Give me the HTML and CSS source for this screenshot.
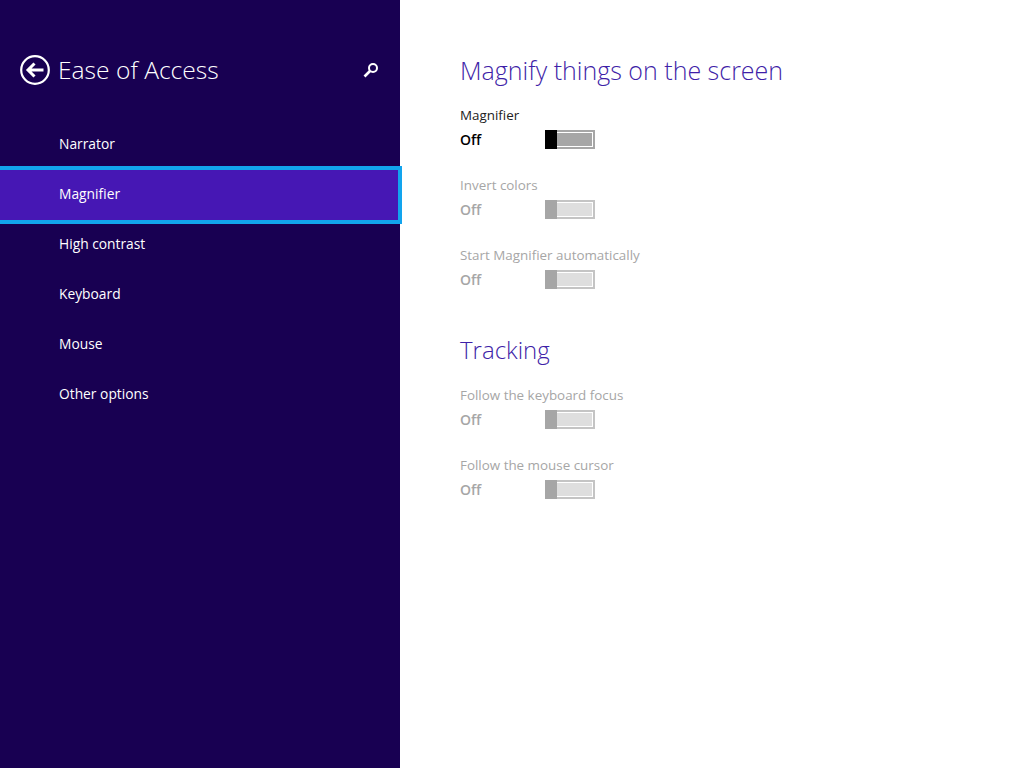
FILE: index.html
```html
<!DOCTYPE html>
<html lang="en">
<head>
  <meta charset="UTF-8" />
  <title>Ease of Access</title>
  <link rel="stylesheet" href="styles.css">
</head>
<body>

  <div class="sidebar">
    <div class="side-header">
      <svg class="back-icon" width="30" height="30" viewBox="0 0 30 30">
        <circle cx="15" cy="15" r="13.8" fill="none" stroke="#fff" stroke-width="2.2"/>
        <path d="M23.5 15H8.5M14.5 8.5L8 15l6.5 6.5" fill="none" stroke="#fff" stroke-width="3"/>
      </svg>
      <h1>Ease of Access</h1>
      <svg class="search-icon" width="16" height="16" viewBox="0 0 16 16">
        <circle cx="10" cy="6" r="4" fill="none" stroke="#fff" stroke-width="2"/>
        <path d="M7 9L1.5 14.5" fill="none" stroke="#fff" stroke-width="2.6"/>
      </svg>
    </div>

    <ul class="nav">
      <li>Narrator</li>
      <li class="active">Magnifier</li>
      <li>High contrast</li>
      <li>Keyboard</li>
      <li>Mouse</li>
      <li>Other options</li>
    </ul>
  </div>

  <div class="content">
    <h2>Magnify things on the screen</h2>

    <div class="setting">
      <div class="label">Magnifier</div>
      <div class="row">
        <span class="state">Off</span>
        <span class="toggle"><span class="thumb"></span><span class="track"></span></span>
      </div>
    </div>

    <div class="setting disabled">
      <div class="label">Invert colors</div>
      <div class="row">
        <span class="state">Off</span>
        <span class="toggle"><span class="thumb"></span><span class="track"></span></span>
      </div>
    </div>

    <div class="setting disabled">
      <div class="label">Start Magnifier automatically</div>
      <div class="row">
        <span class="state">Off</span>
        <span class="toggle"><span class="thumb"></span><span class="track"></span></span>
      </div>
    </div>

    <h2 class="tracking">Tracking</h2>

    <div class="setting disabled">
      <div class="label">Follow the keyboard focus</div>
      <div class="row">
        <span class="state">Off</span>
        <span class="toggle"><span class="thumb"></span><span class="track"></span></span>
      </div>
    </div>

    <div class="setting disabled">
      <div class="label">Follow the mouse cursor</div>
      <div class="row">
        <span class="state">Off</span>
        <span class="toggle"><span class="thumb"></span><span class="track"></span></span>
      </div>
    </div>
  </div>

</body>
</html>
```

FILE: styles.css
```css
body {
  font-family: "Open Sans", Arial, sans-serif;
  background-color: white;
  display: flex;
  height: 100vh;
  margin: 0;
  overflow: hidden;
}

.sidebar {
  width: 400px;
  flex-shrink: 0;
  background-color: #180052;
  color: white;
}

.side-header {
  display: flex;
  align-items: center;
  height: 40px;
  margin-top: 50px;
  padding-left: 20px;
  padding-right: 21px;
}

.side-header h1 {
  flex: 1;
  margin: 0 0 2px 8px;
  font-size: 24.6px;
  font-weight: 300;
}

.back-icon {
  display: block;
}

.nav {
  list-style: none;
  margin: 30px 0 0;
  padding: 0;
}

.nav li {
  height: 50px;
  line-height: 48px;
  padding-left: 59px;
  font-size: 13.8px;
}

.nav li.active {
  background-color: #4617b4;
  box-shadow: 0 0 0 4px #12a4ee;
  position: relative;
  width: 339px;
}

.content {
  padding: 50px 0 0 60px;
}

.content h2 {
  margin: 0 0 15px;
  font-size: 25px;
  line-height: 40px;
  font-weight: 300;
  color: #3f1fa8;
}

.content h2.tracking {
  margin-top: 41px;
  font-size: 24px;
}

.setting {
  margin-bottom: 26px;
}

.label {
  font-size: 13.4px;
  line-height: 20px;
  color: #222;
}

.row {
  display: flex;
  align-items: center;
  height: 20px;
  margin-top: 4px;
}

.state {
  width: 85px;
  font-size: 14px;
  font-weight: 600;
  color: black;
}

.toggle {
  display: flex;
  width: 50px;
  height: 19px;
  background-color: #a6a6a6;
}

.thumb {
  width: 12px;
  background-color: black;
}

.track {
  flex: 1;
  margin: 2px 2px 2px 0;
  border: 1px solid white;
  border-left: none;
  background-color: #a6a6a6;
}

.disabled .label,
.disabled .state {
  color: #a6a6a6;
}

.disabled .toggle {
  background-color: #c4c4c4;
}

.disabled .thumb {
  background-color: #a6a6a6;
}

.disabled .track {
  background-color: #dedede;
}
```
